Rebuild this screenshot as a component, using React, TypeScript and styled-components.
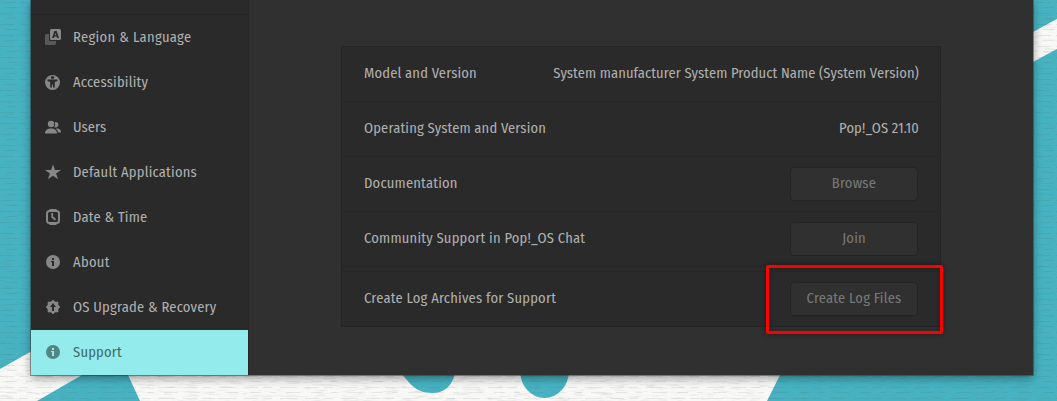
import React from 'react';
import styled, { createGlobalStyle } from 'styled-components';

const Global = createGlobalStyle`
  * { box-sizing: border-box; }
  body {
    margin: 0;
    overflow: hidden;
    font-family: "Fira Sans Condensed", "Fira Sans", "Noto Sans", "Open Sans", sans-serif;
    font-size: 14.5px;
  }
`;

const Desktop = styled.div`
  position: relative;
  width: 1057px;
  height: 401px;
  overflow: hidden;
  background: #47b3c2;
  padding-left: 31px;
`;

const Wallpaper = styled.svg`
  position: absolute;
  inset: 0;
`;

const Window = styled.main`
  position: relative;
  display: flex;
  width: 1002px;
  height: 375px;
  background: #303030;
  box-shadow: 0 0 0 1px rgba(40, 45, 45, 0.45), 0 3px 9px rgba(0, 0, 0, 0.4);
`;

const Sidebar = styled.nav`
  width: 218px;
  flex: none;
  display: flex;
  flex-direction: column;
  background: #2a2a2a;
  border-right: 1px solid #262626;
`;

const SidebarTop = styled.div`
  height: 15px;
  border-bottom: 1px solid #242424;
`;

const NavItem = styled.a<{ $active?: boolean }>`
  display: flex;
  align-items: center;
  gap: 12px;
  height: 45px;
  padding-left: 14px;
  color: ${p => (p.$active ? '#3f6c6b' : '#b0b0b0')};
  background: ${p => (p.$active ? '#94ebeb' : 'transparent')};
  svg {
    flex: none;
    margin-bottom: 1px;
    color: ${p => (p.$active ? '#528583' : '#878787')};
    --hole: ${p => (p.$active ? '#94ebeb' : '#2a2a2a')};
  }
`;

const Text = styled.span<{ $track?: number }>`
  display: block;
  white-space: nowrap;
  line-height: 20px;
  padding-bottom: 2px;
  letter-spacing: ${p => p.$track ?? 0.2}px;
`;

const Value = styled(Text)`
  margin-right: -1px;
`;

const Content = styled.section`
  flex: 1;
  padding: 46px 0 0 92px;
`;

const Card = styled.div`
  width: 600px;
  height: 281px;
  background: #2a2a2a;
  border: 1px solid #242424;
`;

const Row = styled.div`
  display: flex;
  align-items: center;
  justify-content: space-between;
  height: 55px;
  padding: 0 22px;
  color: #b0b0b0;
  border-bottom: 1px solid #262626;
  &:last-child { border-bottom: 0; height: 54px; }
`;

const Gap = styled.div`
  height: 5px;
  border-bottom: 1px solid #262626;
`;

const Button = styled.button`
  display: flex;
  align-items: center;
  justify-content: center;
  width: 128px;
  height: 34px;
  padding: 0;
  font: inherit;
  color: #797979;
  background: #303030;
  border: 1px solid #242424;
  border-radius: 4px;
`;

const Highlight = styled.div`
  position: absolute;
  left: 735px;
  top: 265px;
  width: 177px;
  height: 69px;
  border: 3px solid #ff0000;
  border-radius: 2px;
  box-shadow: 0 0 5px rgba(0, 0, 0, 0.45), inset 0 0 5px rgba(0, 0, 0, 0.3);
`;

const Icon = ({ children }: { children: React.ReactNode }) => (
  <svg width="16" height="16" viewBox="0 0 16 16" fill="currentColor">{children}</svg>
);

const hole = { fill: 'var(--hole)' };

const InfoIcon = () => (
  <Icon>
    <circle cx="8" cy="8" r="7" />
    <path style={hole} d="M7 4h2v2H7zM6 7h3v5H7V8H6z" />
  </Icon>
);

const icons = {
  region: (
    <Icon>
      <path opacity=".5" d="M0 6.500A1.500 1.500 0 0 1 1.500 5H4v6a1 1 0 0 0 1 1h6v2.500A1.500 1.500 0 0 1 9.500 16h-8A1.500 1.500 0 0 1 0 14.500z" />
      <path d="M6.500 0h8A1.500 1.500 0 0 1 16 1.500v8a1.500 1.500 0 0 1-1.500 1.500h-8A1.500 1.500 0 0 1 5 9.500v-8A1.500 1.500 0 0 1 6.500 0z" />
      <path style={hole} fillRule="evenodd" d="M9.400 2h2.200L14 9h-2l-.4-1.400H9.400L9 9H7.100zM10.500 4l-.7 2.300h1.400z" />
    </Icon>
  ),
  access: (
    <Icon>
      <circle cx="7.500" cy="8.500" r="7.500" />
      <circle style={hole} cx="7.500" cy="3.500" r="1.600" />
      <path style={hole} d="M2.500 5.500h10v1.500L9.800 8V13.500H8V10.500H7v3H5.200V8L2.500 7z" />
    </Icon>
  ),
  users: (
    <Icon>
      <circle cx="6" cy="5" r="3.200" />
      <path d="M9.700 3.300A2.700 2.700 0 1 1 9.200 8 4.800 4.800 0 0 0 9.700 3.300z" />
      <path d="M0 14.500c0-3.500 2.500-5 6-5s6 1.500 6 5zM10.800 9.700c3.500-.5 5.200 1 5.200 3.800h-3c-.3-1.700-1-2.900-2.200-3.800z" />
    </Icon>
  ),
  star: (
    <Icon>
      <path d="M8 .5l2 5.400h6l-4.900 3.500 2 5.900L8 11.800l-5.100 3.500 2-5.900L0 5.900h6z" />
    </Icon>
  ),
  clock: (
    <Icon>
      <path d="M4.500 0h7v2h-7zM4.500 14h7v2h-7z" />
      <rect x="2" y="2" width="12" height="12" rx="2.500" fill="none" stroke="currentColor" strokeWidth="2" />
      <path d="M7.200 4v4l3.300 2.700" fill="none" stroke="currentColor" strokeWidth="1.800" />
    </Icon>
  ),
  info: <InfoIcon />,
  upgrade: (
    <Icon>
      <path d="M8 1l2 2h3v3l2 2-2 2v3h-3l-2 2-2-2H3v-3L1 8l2-2V3h3z" strokeLinejoin="round" stroke="currentColor" strokeWidth=".6" />
      <path style={hole} d="M8 4l3 4H9v4H7V8H5z" />
    </Icon>
  ),
};

const items: { label: string; icon: React.ReactNode; active?: boolean; track?: number }[] = [
  { label: 'Region & Language', icon: icons.region, track: 0.32 },
  { label: 'Accessibility', icon: icons.access },
  { label: 'Users', icon: icons.users, track: 0.1 },
  { label: 'Default Applications', icon: icons.star },
  { label: 'Date & Time', icon: icons.clock },
  { label: 'About', icon: icons.info, track: 0.3 },
  { label: 'OS Upgrade & Recovery', icon: icons.upgrade, track: 0.2 },
  { label: 'Support', icon: icons.info, active: true },
];

export default function App() {
  return (
    <Desktop>
      <Global />
      <Wallpaper width="1057" height="401" viewBox="0 0 1057 401">
        <defs>
          <filter id="weave" x="0" y="0" width="100%" height="100%">
            <feTurbulence type="fractalNoise" baseFrequency="0.07 0.45" numOctaves="3" seed="4" />
            <feColorMatrix values="0 0 0 0 .12  0 0 0 0 .2  0 0 0 0 .16  1.800 0 0 0 -.9" />
          </filter>
          <pattern id="threads" width="61" height="11" patternUnits="userSpaceOnUse">
            <path d="M0 2.500h14m5 0h9m8 0h17M6 7.500h11m9 0h6m10 0h14" stroke="#3d4a3c" strokeWidth="1" opacity=".1" />
          </pattern>
        </defs>
        <g fill="#f8f8f7">
          <path d="M0 369L62 334H780V375L767 401H0z" />
          <path d="M1020 39L1057 19V49L1020 69z" />
        </g>
        <g fill="#47b3c2">
          <path d="M37 401L82 375 100 364H123L140 401z" />
          <path d="M396 366C408 382 415 393 432 393 449 393 455 380 456 366z" />
          <ellipse cx="544.500" cy="371" rx="24.500" ry="27" />
        </g>
        <rect width="1057" height="401" fill="url(#threads)" />
        <rect width="1057" height="401" filter="url(#weave)" opacity=".2" />
      </Wallpaper>
      <Window>
        <Sidebar>
          <SidebarTop />
          {items.map(i => (
            <NavItem key={i.label} $active={i.active}>
              {i.icon}
              <Text $track={i.track}>{i.label}</Text>
            </NavItem>
          ))}
        </Sidebar>
        <Content>
          <Card>
            <Row><Text $track={0.16}>Model and Version</Text><Value $track={0.09}>System manufacturer System Product Name (System Version)</Value></Row>
            <Row><Text $track={0.15}>Operating System and Version</Text><Value $track={0.12}>Pop!_OS 21.10</Value></Row>
            <Row><Text>Documentation</Text><Button><Text>Browse</Text></Button></Row>
            <Row><Text>Community Support in Pop!_OS Chat</Text><Button><Text>Join</Text></Button></Row>
            <Gap />
            <Row><Text>Create Log Archives for Support</Text><Button><Text>Create Log Files</Text></Button></Row>
          </Card>
        </Content>
        <Highlight />
      </Window>
    </Desktop>
  );
}
